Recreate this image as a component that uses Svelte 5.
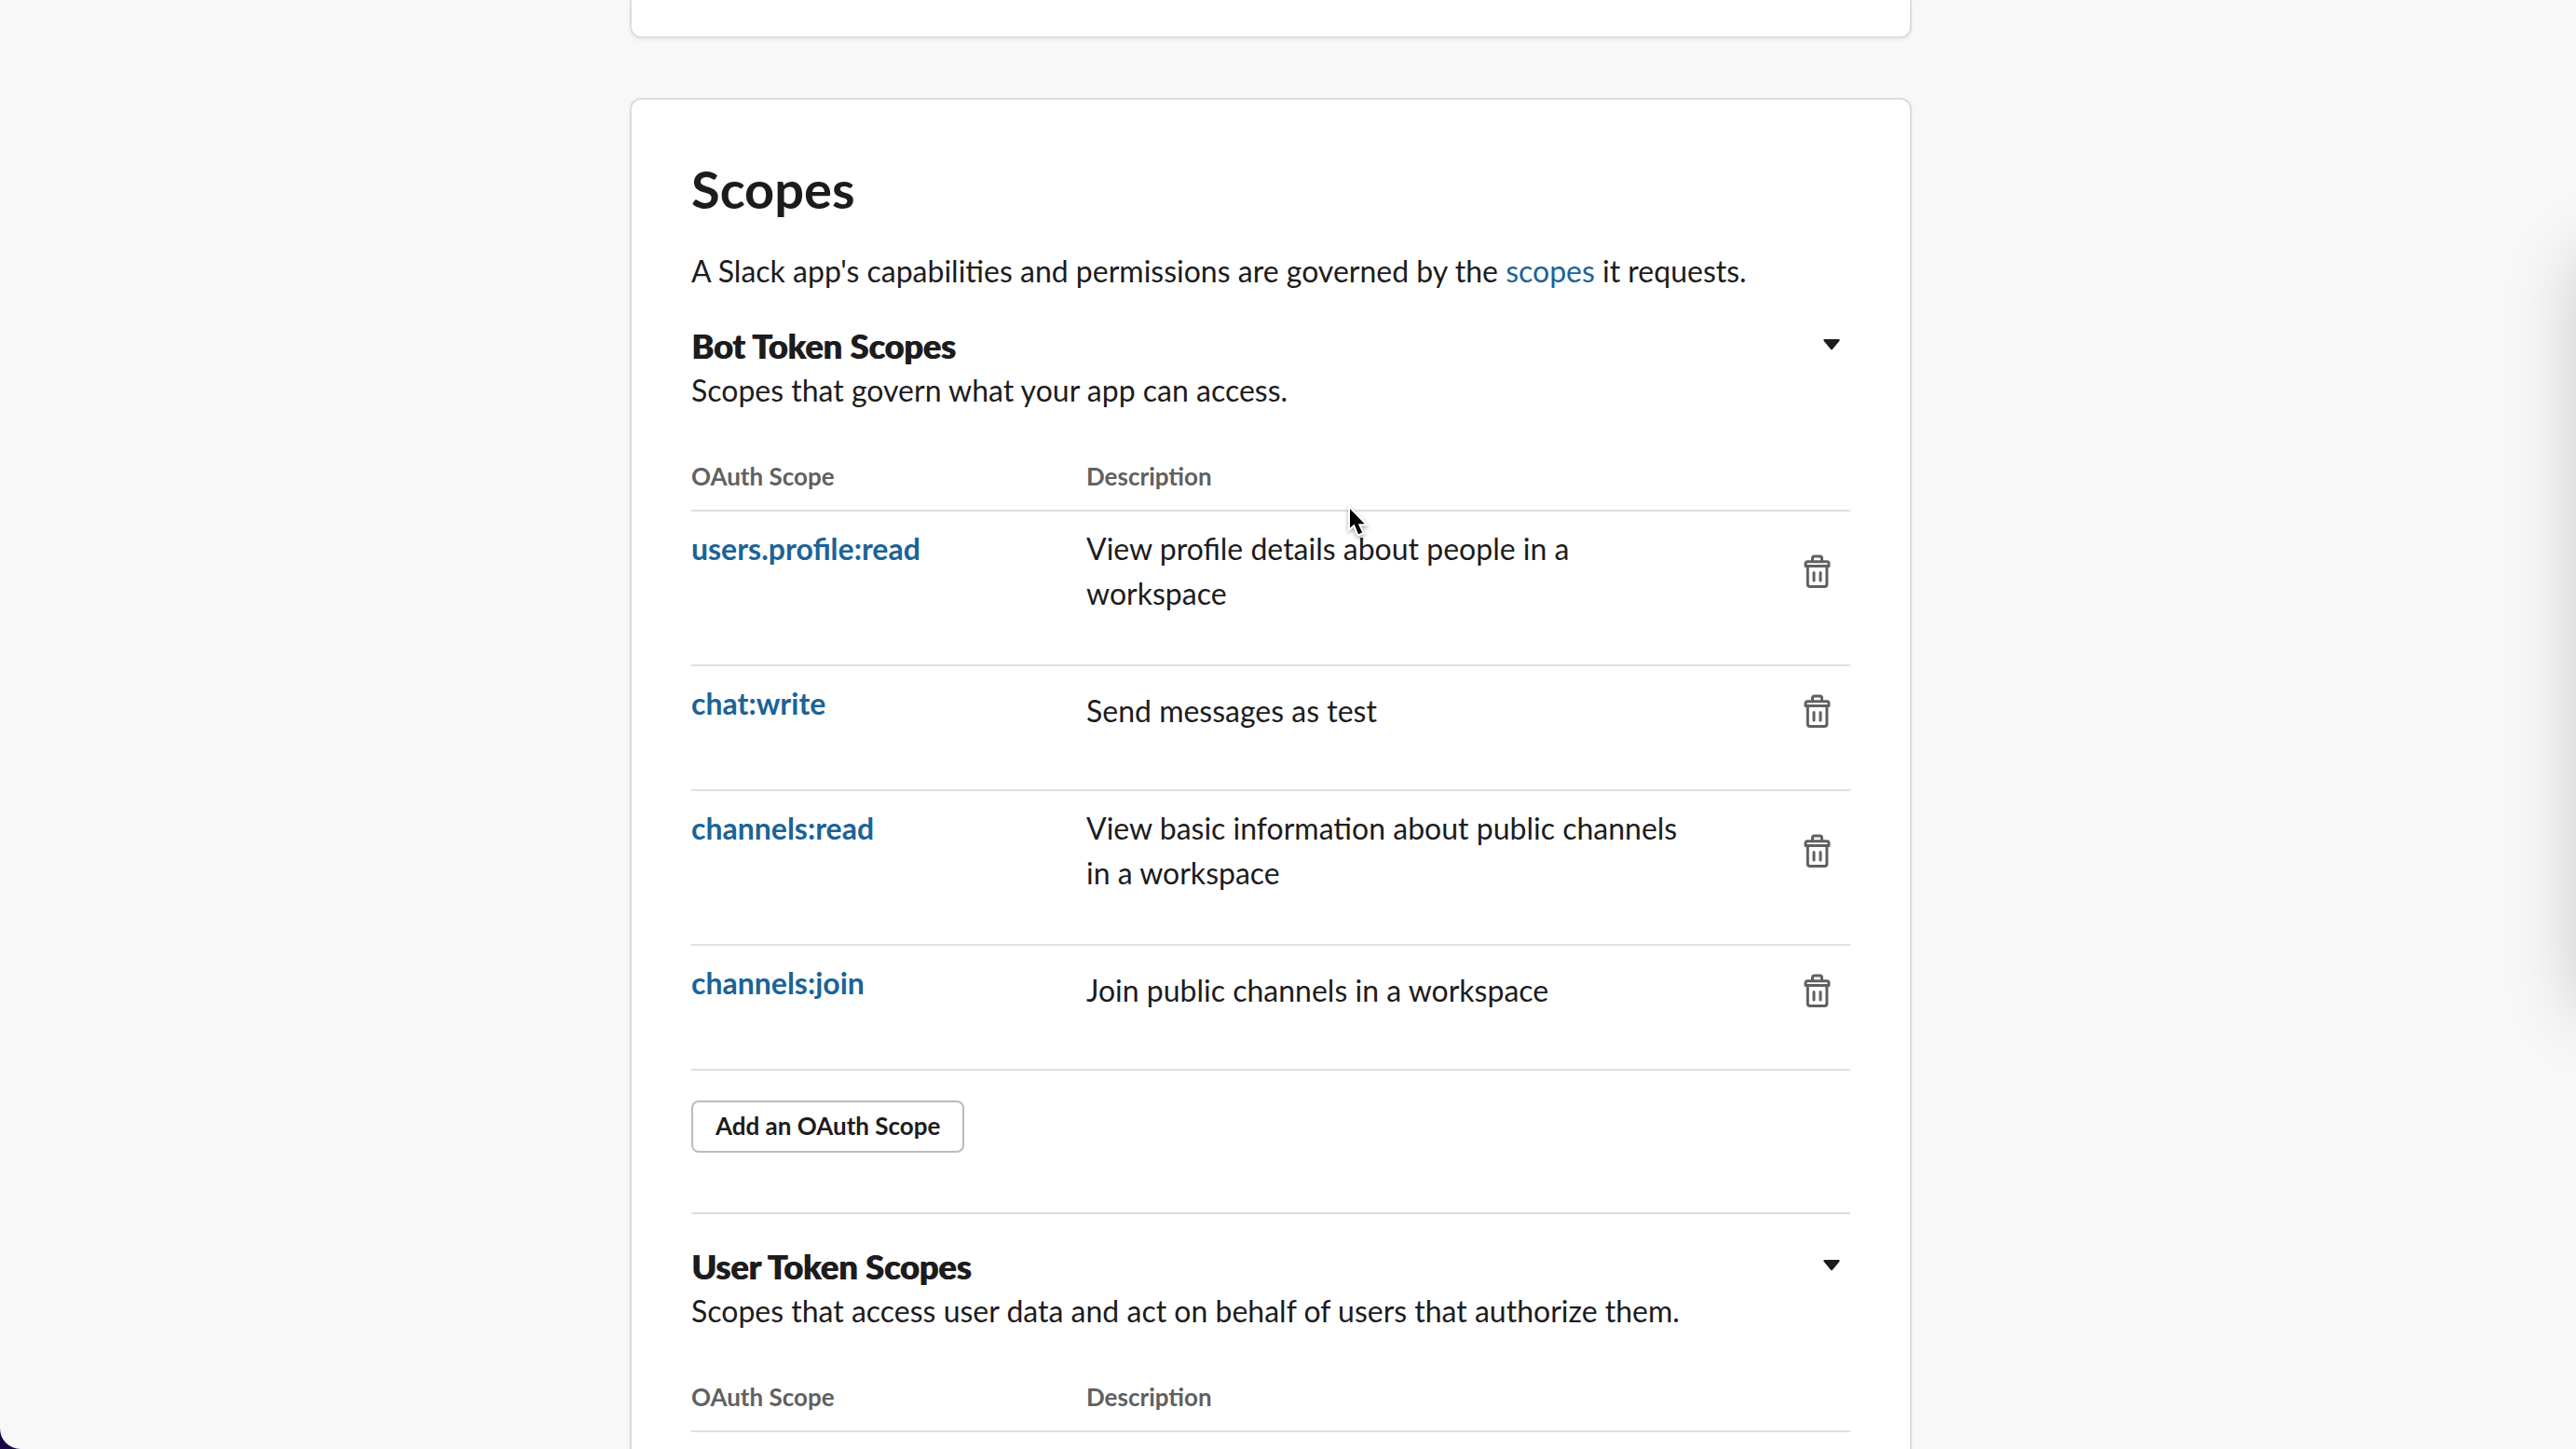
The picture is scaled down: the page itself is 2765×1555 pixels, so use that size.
<script>
  const botScopes = [
    { name: 'users.profile:read', description: 'View profile details about people in a workspace' },
    { name: 'chat:write', description: 'Send messages as test' },
    { name: 'channels:read', description: 'View basic information about public channels in a workspace' },
    { name: 'channels:join', description: 'Join public channels in a workspace' }
  ];
</script>

{#snippet sectionHead(title, text)}
  <header class="section-head">
    <div>
      <h3>{title}</h3>
      <p>{text}</p>
    </div>
    <button class="toggle" type="button" aria-label="Toggle {title}">
      <svg viewBox="0 0 20 14" aria-hidden="true">
        <path d="M2.300 2h15.400L10 11.300z" />
      </svg>
    </button>
  </header>
{/snippet}

{#snippet scopeTable(rows)}
  <table>
    <thead>
      <tr>
        <th class="col-scope" scope="col">OAuth Scope</th>
        <th class="col-description" scope="col">Description</th>
        <td class="col-action"></td>
      </tr>
    </thead>
    <tbody>
      {#each rows as row}
        <tr>
          <td class="scope"><a href="#{row.name}">{row.name}</a></td>
          <td>{row.description}</td>
          <td>
            <button class="delete" type="button" aria-label="Delete {row.name}">
              <svg viewBox="0 0 30 36" aria-hidden="true">
                <path d="M10.500 7.500V4a2 2 0 0 1 2-2h6a2 2 0 0 1 2 2v3.500" />
                <path d="M3 12.500V9.700a2 2 0 0 1 2-2h21a2 2 0 0 1 2 2v2.800z" />
                <path d="M5.300 13v19a2.500 2.500 0 0 0 2.500 2.500h15.600a2.500 2.500 0 0 0 2.500-2.500V13" />
                <path d="M12 19.500v8.500M19 19.500v8.500" />
              </svg>
            </button>
          </td>
        </tr>
      {/each}
    </tbody>
  </table>
{/snippet}

<div class="desktop">
  <div class="window">
    <main>
      <section class="card previous" aria-label="Previous settings"></section>

      <section class="card">
        <h2>Scopes</h2>
        <p class="intro">
          A Slack app's capabilities and permissions are governed by the <a href="#scopes">scopes</a> it requests.
        </p>

        {@render sectionHead('Bot Token Scopes', 'Scopes that govern what your app can access.')}
        {@render scopeTable(botScopes)}
        <button class="add" type="button">Add an OAuth Scope</button>

        <hr />

        {@render sectionHead('User Token Scopes', 'Scopes that access user data and act on behalf of users that authorize them.')}
        {@render scopeTable([])}
      </section>
    </main>
    <div class="side-shadow"></div>
    <svg class="pointer" viewBox="0 0 32 44" aria-hidden="true">
      <path d="M5 5v20.500l4.700-4L14 32.300l4.200-1.700-4.400-9.400h6.900z" />
    </svg>
  </div>
</div>

<style>
  :global(body) {
    margin: 0;
    overflow: hidden;
  }

  .desktop {
    height: 100vh;
    background: #1b0545;
  }

  .window {
    position: relative;
    height: 100%;
    overflow: hidden;
    border-bottom-left-radius: 22px;
    background: #f8f8f8;
    color: #1d1c1d;
    font: 32px/48px Lato, "Liberation Sans", sans-serif;
  }

  main {
    display: grid;
    grid-template-columns: 676px minmax(0, 1376px) 1fr;
    row-gap: 64px;
  }

  .card {
    grid-column: 2;
    padding: 64px;
    border: 2px solid #ddd;
    border-radius: 12px;
    background: #fff;
    box-shadow: 0 2px 4px rgba(0, 0, 0, 0.06);
  }

  .previous {
    padding: 0 0 39px;
    border-top: 0;
    border-radius: 0 0 12px 12px;
  }

  h2,
  h3,
  p {
    margin: 0;
  }

  h2 {
    margin-bottom: 32px;
    font-size: 56px;
    font-weight: 700;
    line-height: 64px;
  }

  h3 {
    font-size: 36px;
    font-weight: 900;
    line-height: 48px;
    text-shadow: 1px 0 0 currentColor;
  }

  .intro {
    margin-bottom: 32px;
  }

  a {
    color: #1c6397;
    text-decoration: none;
  }

  .section-head {
    display: flex;
    justify-content: space-between;
    align-items: flex-start;
    margin-bottom: 48px;
  }

  button {
    margin: 0;
    padding: 0;
    border: 0;
    background: none;
    color: inherit;
    font: inherit;
    cursor: pointer;
  }

  .toggle {
    display: flex;
    align-items: center;
    padding: 16px 10px;
  }

  .toggle svg {
    width: 20px;
    height: 14px;
    fill: #1d1c1d;
    stroke: #1d1c1d;
    stroke-width: 2;
    stroke-linejoin: round;
  }

  table {
    width: 100%;
    table-layout: fixed;
    border-spacing: 0;
  }

  th {
    padding: 0 0 16px;
    color: #616061;
    font-size: 26px;
    font-weight: 700;
    line-height: 40px;
    text-align: left;
  }

  .col-scope {
    width: 424px;
  }

  .col-description {
    width: 52%;
  }

  th,
  td {
    border-bottom: 2px solid #e0e0e0;
  }

  td {
    padding: 16px 0 52px;
    vertical-align: middle;
  }

  td.col-action {
    padding: 0;
  }

  .scope {
    font-weight: 700;
    vertical-align: top;
  }

  .delete {
    display: flex;
    align-items: center;
    justify-content: center;
    width: 72px;
    height: 64px;
    margin-left: auto;
  }

  .delete svg {
    width: 30px;
    height: 36px;
    fill: none;
    stroke: #616061;
    stroke-width: 3;
    stroke-linecap: round;
    stroke-linejoin: round;
  }

  .add {
    box-sizing: border-box;
    display: block;
    height: 56px;
    margin-top: 32px;
    padding: 0 24px 2px;
    border: 2px solid #bbb;
    border-radius: 8px;
    background: #fff;
    font-size: 26px;
    font-weight: 700;
    line-height: 40px;
  }

  hr {
    height: 2px;
    margin: 64px 0 32px;
    border: 0;
    background: #ddd;
  }

  .side-shadow {
    position: absolute;
    top: 275px;
    left: 100%;
    width: 400px;
    height: 813px;
    box-shadow: 0 0 72px rgba(0, 0, 0, 0.18);
  }

  .pointer {
    position: absolute;
    top: 541px;
    left: 1444px;
    width: 32px;
    height: 44px;
    fill: #000;
    stroke: #fff;
    stroke-width: 4;
    paint-order: stroke;
    filter: drop-shadow(0 2px 2px rgba(0, 0, 0, 0.35));
  }
</style>
